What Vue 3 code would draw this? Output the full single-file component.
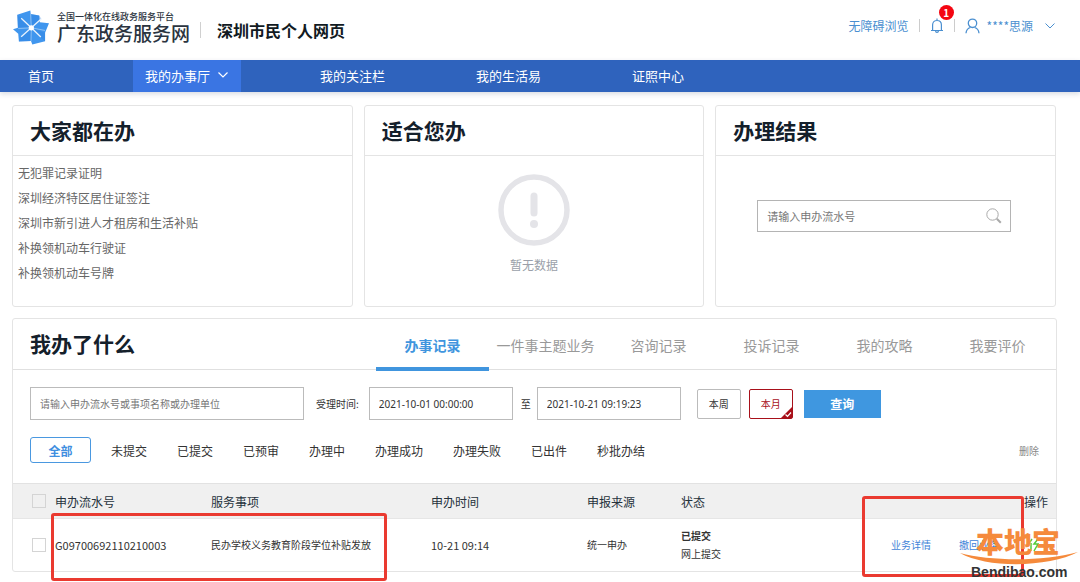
<script setup>
import { ref } from 'vue'

const navItems = [
  { label: '首页' },
  { label: '我的办事厅', active: true },
  { label: '我的关注栏' },
  { label: '我的生活易' },
  { label: '证照中心' },
]
const popular = [
  '无犯罪记录证明',
  '深圳经济特区居住证签注',
  '深圳市新引进人才租房和生活补贴',
  '补换领机动车行驶证',
  '补换领机动车号牌',
]
const tabs = ['办事记录', '一件事主题业务', '咨询记录', '投诉记录', '我的攻略', '我要评价']
const statuses = ['全部', '未提交', '已提交', '已预审', '办理中', '办理成功', '办理失败', '已出件', '秒批办结']
const activeTab = ref('办事记录')
const activeStatus = ref('全部')
const dateFrom = ref('2021-10-01 00:00:00')
const dateTo = ref('2021-10-21 09:19:23')
const rows = [
  {
    id: 'G09700692110210003',
    item: '民办学校义务教育阶段学位补贴发放',
    time: '10-21 09:14',
    source: '统一申办',
    status: '已提交',
    note: '网上提交',
  },
]
</script>

<template>
  <div class="page">
    <header class="top">
      <svg class="logo" viewBox="39 28 110 106" aria-hidden="true">
        <path fill="#4096ee" d="M52 42 92 29 93 40 119 44 121 65 149 68 137 97 137 123 98 133 94 122 57 124 55 100 39 86 54 82Z" />
        <path fill="#2b7fdc" d="M95 82 92 29 93 40 119 44 126 55ZM95 82 137 97 137 123 124 112ZM95 82 94 122 57 124 63 111ZM95 82 54 82 52 42 64 52Z" opacity=".35" />
        <path stroke="#e8f2fd" stroke-width="4" fill="none" d="M95 82 64 53M95 82 125 55M95 82 64 109M95 82 124 110" />
        <path stroke="#b9d8f8" stroke-width="2" fill="none" d="M95 82 93 40M95 82 94 122M95 82 55 84M95 82 137 90" />
        <circle cx="95" cy="82" r="8" fill="#fff" />
      </svg>
      <div class="brand">
        <span class="brand-small">全国一体化在线政务服务平台</span>
        <span class="brand-big">广东政务服务网</span>
      </div>
      <i class="sep"></i>
      <h1>深圳市民个人网页</h1>
      <div class="user">
        <a href="#">无障碍浏览</a>
        <i class="bar"></i>
        <button class="bell" aria-label="消息">
          <svg width="14" height="16" viewBox="0 0 14 16" fill="none" stroke="#4a8fd0" stroke-width="1.2">
            <path d="M1 12.5h12M2.6 12.3V7C2.6 4.300 4.500 2.500 7 2.500S11.400 4.300 11.400 7v5.300M7 .6v1.900M5.500 12.800c.2 2.200 2.800 2.200 3 0" />
          </svg>
          <span class="badge">1</span>
        </button>
        <i class="bar"></i>
        <button class="account">
          <svg width="15" height="16" viewBox="0 0 15 16" fill="none" stroke="#4a8fd0" stroke-width="1.3">
            <circle cx="7.500" cy="5.300" r="4.200" />
            <path d="M1 15.200c.3-3.300 2-5 4.400-5.700M14 15.200c-.3-3.300-2-5-4.400-5.700" />
          </svg>
          <span>****思源</span>
          <svg class="caret" width="10" height="6" viewBox="0 0 10 6" fill="none" stroke="#4a8fd0"><path d="m.5.5 4.500 4.500L9.500.5" /></svg>
        </button>
      </div>
    </header>

    <nav class="nav">
      <a v-for="n in navItems" :key="n.label" href="#" :class="{ active: n.active }">
        {{ n.label }}
        <svg v-if="n.active" width="10" height="6" viewBox="0 0 10 6" fill="none" stroke="#fff" stroke-width="1.200"><path d="m.5.5 4.500 4.500L9.500.5" /></svg>
      </a>
    </nav>

    <main>
      <div class="cards">
        <section class="card">
          <h2>大家都在办</h2>
          <ul>
            <li v-for="p in popular" :key="p"><a href="#">{{ p }}</a></li>
          </ul>
        </section>
        <section class="card">
          <h2>适合您办</h2>
          <div class="empty">
            <svg width="72" height="72" viewBox="0 0 72 72" aria-hidden="true">
              <circle cx="36" cy="36" r="33" fill="none" stroke="#e4e4e8" stroke-width="5.500" />
              <path d="M36 22v17" stroke="#e4e4e8" stroke-width="7" stroke-linecap="round" />
              <circle cx="36" cy="50" r="4" fill="#e4e4e8" />
            </svg>
            <p>暂无数据</p>
          </div>
        </section>
        <section class="card">
          <h2>办理结果</h2>
          <div class="search">
            <input type="text" placeholder="请输入申办流水号" aria-label="申办流水号" />
            <button aria-label="搜索">
              <svg width="16" height="16" viewBox="0 0 16 16" fill="none" stroke="#aaa">
                <circle cx="6.500" cy="6.500" r="5.700" />
                <path d="m10.800 10.800 4 4" stroke-width="2" />
              </svg>
            </button>
          </div>
        </section>
      </div>

      <section class="panel">
        <div class="panel-head">
          <h2>我办了什么</h2>
          <div class="tabs" role="tablist">
            <button v-for="t in tabs" :key="t" role="tab" :aria-selected="activeTab === t" :class="{ on: activeTab === t }" @click="activeTab = t">{{ t }}</button>
          </div>
        </div>

        <form class="filters" @submit.prevent>
          <input class="keyword" type="text" placeholder="请输入申办流水号或事项名称或办理单位" aria-label="关键字" />
          <label for="from">受理时间:</label>
          <input id="from" v-model="dateFrom" class="date" type="text" />
          <label class="to" for="to">至</label>
          <input id="to" v-model="dateTo" class="date" type="text" />
          <button type="button" class="range week">本周</button>
          <button type="button" class="range month">
            本月
            <svg class="tick" width="11" height="11" viewBox="0 0 11 11"><path fill="#a8101a" d="M11 0v11H0z" /><path d="m4.500 7.500 2 1.800L10 5.500" fill="none" stroke="#fff" stroke-width="1.200" /></svg>
          </button>
          <button type="submit" class="query">查询</button>
        </form>

        <div class="statuses">
          <button v-for="s in statuses" :key="s" :class="{ on: activeStatus === s }" @click="activeStatus = s">{{ s }}</button>
          <button class="delete">删除</button>
        </div>

        <table>
          <colgroup>
            <col class="c-check" /><col class="c-id" /><col class="c-item" /><col class="c-time" /><col class="c-source" /><col />
            <col class="c-ops" />
          </colgroup>
          <thead>
            <tr>
              <th class="check"><input type="checkbox" aria-label="全选" /></th>
              <th>申办流水号</th>
              <th>服务事项</th>
              <th>申办时间</th>
              <th>申报来源</th>
              <th>状态</th>
              <th class="ops-head">操作</th>
            </tr>
          </thead>
          <tbody>
            <tr v-for="r in rows" :key="r.id">
              <td class="check"><input type="checkbox" :aria-label="r.id" /></td>
              <td class="num">{{ r.id }}</td>
              <td>{{ r.item }}</td>
              <td class="num">{{ r.time }}</td>
              <td>{{ r.source }}</td>
              <td class="state"><b>{{ r.status }}</b><br />{{ r.note }}</td>
              <td>
                <div class="ops">
                  <a href="#">业务详情</a>
                  <a href="#">撤回业务</a>
                  <svg width="12" height="16" viewBox="0 0 12 16" fill="none" stroke="#55cc3a" stroke-width="1.500" aria-hidden="true"><path d="M5 2 1 8M4 6v8M11 2 7 7h4L7 14" /></svg>
                </div>
              </td>
            </tr>
          </tbody>
        </table>

        <div class="mark mark-left"></div>
        <div class="mark mark-right"></div>
        <div class="stamp">
          <span class="stamp-name">本地宝</span>
          <svg viewBox="0 0 118 13" aria-hidden="true"><path fill="#f58a3c" d="M0 1C30 9 82 10 118 0 90 15 28 17 0 1Z" /></svg>
          <span class="stamp-url">Bendibao.com</span>
        </div>
      </section>
    </main>
  </div>
</template>

<style>
body {
  margin: 0;
  background: #fff;
}
</style>

<style scoped>
.page {
  min-height: 100vh;
  font-family: "Noto Sans CJK SC", sans-serif;
  font-size: 12px;
  color: #333;
}
* {
  box-sizing: border-box;
}
a {
  color: inherit;
  text-decoration: none;
}
button {
  font: inherit;
  color: inherit;
  background: none;
  border: 0;
  padding: 0;
  cursor: pointer;
}
h1, h2, p, ul {
  margin: 0;
  padding: 0;
}
svg {
  display: block;
  flex: none;
}
.top {
  display: flex;
  align-items: center;
  height: 60px;
  padding: 0 25px 0 13px;
}
.logo {
  width: 36px;
  height: 35px;
  margin-bottom: 6px;
}
.brand {
  display: flex;
  flex-direction: column;
  margin: 0 10px 8px 8px;
  color: #2b3440;
  font-weight: 500;
}
.brand-small {
  font-size: 9px;
  line-height: 12px;
}
.brand-big {
  font-size: 19px;
  line-height: 19px;
}
.sep {
  width: 1px;
  height: 16px;
  background: #d0d0d0;
}
h1 {
  margin-left: 16px;
  font-size: 16px;
  line-height: 24px;
  color: #111a22;
}
.user {
  display: flex;
  align-items: center;
  margin-left: auto;
  margin-bottom: 9px;
  gap: 10px;
  color: #4a8fd0;
}
.bar {
  width: 1px;
  height: 13px;
  background: #ccc;
}
.bell {
  position: relative;
}
.badge {
  position: absolute;
  left: 9px;
  top: -13px;
  width: 15px;
  height: 15px;
  border-radius: 50%;
  background: #f40612;
  color: #fff;
  font-size: 10px;
  font-weight: 700;
  line-height: 15px;
  text-align: center;
}
.account {
  display: flex;
  align-items: center;
  gap: 7px;
}
.caret {
  margin-left: 5px;
}
.nav {
  display: flex;
  gap: 67px;
  height: 32px;
  padding-left: 16px;
  background: #2f63bd;
  box-shadow: 0 2px 5px rgba(40, 60, 100, 0.18);
  color: #fff;
  font-size: 13px;
}
.nav a {
  display: flex;
  align-items: center;
  gap: 8px;
  padding: 0 12px 2px;
}
.nav .active {
  padding-right: 13px;
  background: #3a75e3;
}
main {
  padding: 13px 23px 10px 12px;
}
.cards {
  display: grid;
  grid-template-columns: repeat(3, 1fr);
  gap: 11px;
  padding-right: 1px;
}
.card, .panel {
  border: 1px solid #e4e4e4;
  border-radius: 3px;
}
.card {
  min-height: 202px;
}
h2 {
  font-size: 21px;
  line-height: 49px;
  color: #14202b;
  padding-left: 17px;
}
.card h2 {
  border-bottom: 1px solid #e4e4e4;
}
.card ul {
  list-style: none;
  padding: 4px 5px;
  line-height: 25px;
  color: #666;
}
.empty {
  display: flex;
  flex-direction: column;
  align-items: center;
  gap: 10px;
  padding-top: 18px;
  color: #9a9fa9;
  line-height: 18px;
}
.search {
  display: flex;
  align-items: center;
  margin: 44px 44px 0 41px;
  border: 1px solid #b4b4b4;
  height: 32px;
  padding: 0 8px 0 9px;
}
input {
  font-family: inherit;
  color: #333;
  background: #fff;
  border-radius: 0;
  outline: 0;
}
input::placeholder {
  color: #777;
  opacity: 1;
}
.search input {
  flex: 1;
  min-width: 0;
  border: 0;
  padding: 0;
  font-size: 11px;
}
.panel {
  position: relative;
  margin-top: 11px;
}
.panel-head {
  display: flex;
  justify-content: space-between;
  height: 51px;
  padding-right: 2px;
  border-bottom: 1px solid #e0e0e0;
}
.tabs {
  display: flex;
}
.tabs button {
  width: 113px;
  height: 52px;
  padding-top: 4px;
  border-bottom: 4px solid transparent;
  font-size: 14px;
  color: #999;
}
.tabs .on {
  color: #4095de;
  font-weight: 700;
  border-color: #4095de;
}
.filters {
  display: flex;
  align-items: center;
  padding: 17px 17px 0;
  font-size: 10px;
}
.filters input {
  height: 33px;
  border: 1px solid #bbb;
  padding: 0 9px;
  font-size: 10px;
}
.filters .keyword {
  width: 274px;
  margin-right: 12px;
}
.filters .date {
  width: 144px;
  margin-left: 10px;
  font-family: "Noto Sans", sans-serif;
}
.filters .to {
  margin-left: 8px;
}
.filters .to + .date {
  margin-left: 6px;
}
.range {
  width: 44px;
  height: 30px;
  border: 1px solid #bbb;
  border-radius: 2px;
  margin-left: 8px;
}
.week {
  margin-left: 16px;
}
.month {
  position: relative;
  border-color: #a8101a;
  color: #a8101a;
}
.tick {
  position: absolute;
  right: 0;
  bottom: 0;
}
.query {
  width: 77px;
  height: 28px;
  margin-left: 11px;
  background: #3f97e0;
  color: #fff;
  font-size: 12px;
  font-weight: 700;
}
.statuses {
  display: flex;
  align-items: center;
  gap: 30px;
  padding: 17px 17px 0;
}
.statuses .on {
  width: 61px;
  height: 26px;
  margin-right: -10px;
  border: 1px solid #4a98e0;
  border-radius: 3px;
  color: #3f8fe0;
  font-weight: 700;
}
.statuses .delete {
  margin-left: auto;
  font-size: 10px;
  color: #888;
}
table {
  width: 100%;
  margin-top: 20px;
  border-collapse: collapse;
  table-layout: fixed;
}
.c-check {
  width: 42px;
}
.c-id, .c-time {
  width: 156px;
}
.c-item {
  width: 220px;
}
.c-source {
  width: 94px;
}
.c-ops {
  width: 178px;
}
th, td {
  padding: 0;
  text-align: left;
  font-weight: 400;
}
th {
  height: 35px;
  background: #f0f0f0;
  border-top: 1px solid #e2e2e2;
  border-bottom: 1px solid #e6e6e6;
  color: #26323c;
}
td {
  height: 52px;
  font-size: 10px;
  white-space: nowrap;
}
.num {
  font-size: 11px;
}
.check {
  padding-left: 19px;
}
.check input {
  display: block;
  appearance: none;
  width: 14px;
  height: 14px;
  margin: 0;
  border: 1px solid #d4d4d4;
  background: transparent;
}
.state {
  line-height: 18px;
}
.ops-head {
  text-align: right;
  padding-right: 8px;
}
.ops {
  display: flex;
  align-items: center;
  gap: 28px;
  padding-left: 13px;
  color: #3f84d8;
}
.mark {
  position: absolute;
  border: 3px solid #ea3a30;
  border-radius: 3px;
  pointer-events: none;
}
.mark-left {
  left: 38px;
  top: 194px;
  width: 336px;
  height: 68px;
}
.mark-right {
  right: 32px;
  top: 177px;
  width: 162px;
  height: 81px;
}
.stamp {
  position: absolute;
  right: -22px;
  top: 208px;
  width: 118px;
  pointer-events: none;
}
.stamp span {
  display: block;
}
.stamp-name {
  padding-left: 16px;
  font-size: 28px;
  font-weight: 900;
  line-height: 28px;
  color: #f58a3c;
}
.stamp svg {
  width: 118px;
  height: 13px;
  margin-top: -3px;
}
.stamp-url {
  padding-left: 11px;
  font-family: "Liberation Sans", sans-serif;
  font-size: 14px;
  font-weight: 700;
  line-height: 14px;
  color: #333;
}
</style>
